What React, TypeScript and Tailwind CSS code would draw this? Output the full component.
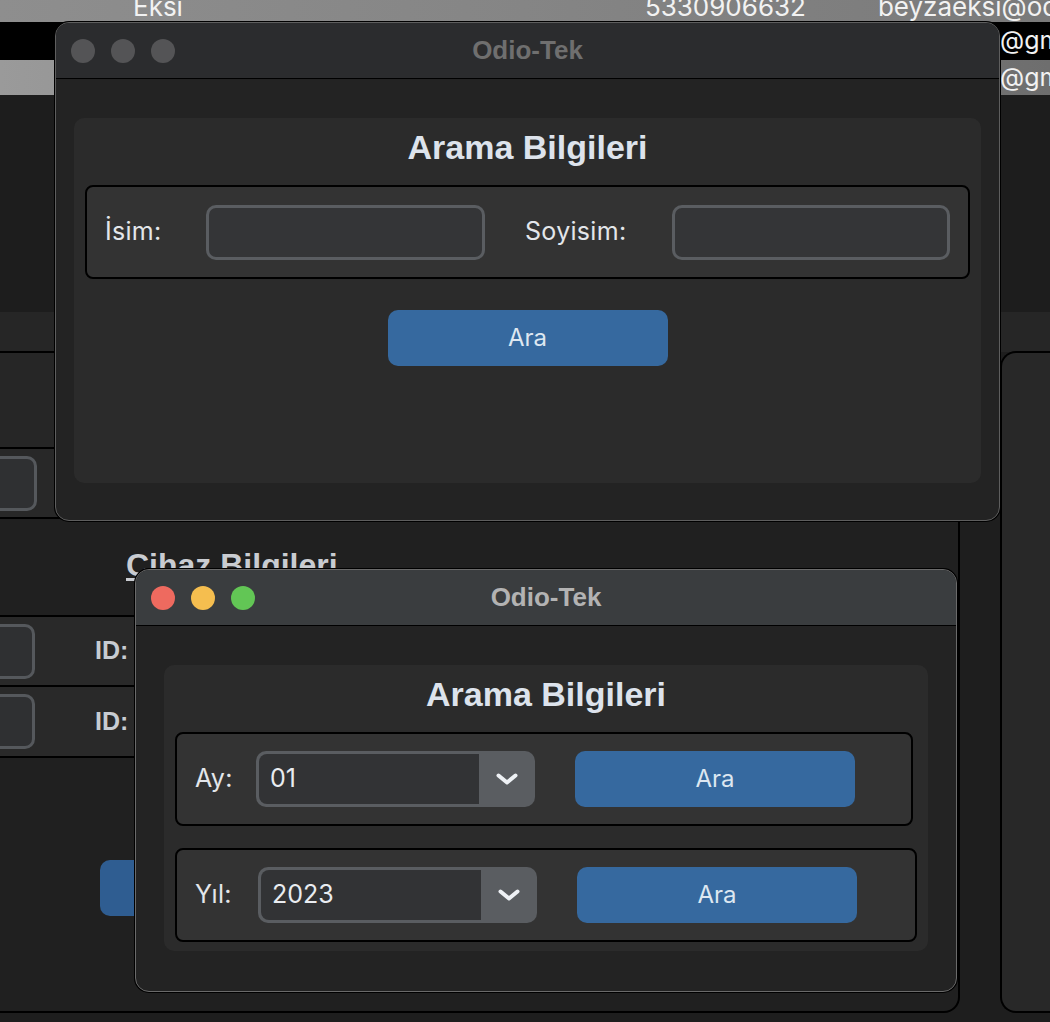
import React from 'react';

const ui = { fontFamily: 'Inter, "Noto Sans", sans-serif' };
const head = { fontFamily: '"Liberation Sans", Arial, sans-serif' };

const Chevron = () => (
  <svg width="24" height="14" viewBox="0 0 24 14" fill="none">
    <path d="M3.5 3.5l8.5 7 8.5-7" stroke="#eef1f5" strokeWidth="4" strokeLinecap="round" strokeLinejoin="round" />
  </svg>
);

const Lights = ({ active }: { active: boolean }) => (
  <div className="flex items-center gap-[16px]">
    <span className={`w-[24px] h-[24px] rounded-full ${active ? 'bg-[#ee6a5f]' : 'bg-[#545456]'}`} />
    <span className={`w-[24px] h-[24px] rounded-full ${active ? 'bg-[#f5be4f]' : 'bg-[#545456]'}`} />
    <span className={`w-[24px] h-[24px] rounded-full ${active ? 'bg-[#62c655]' : 'bg-[#545456]'}`} />
  </div>
);

const TitleBar = ({ active }: { active: boolean }) => (
  <div
    className={`relative flex items-center h-[56px] px-[15px] border-b border-black ${active ? 'bg-[#3a3d3f]' : 'bg-[#2b2c2e]'}`}
  >
    <Lights active={active} />
    <div
      className={`absolute inset-0 flex items-center justify-center text-[26px] font-bold ${active ? 'text-[#b3b3b3]' : 'text-[#6f6f6f]'}`}
      style={head}
    >
      Odio-Tek
    </div>
  </div>
);

const Field = ({ w }: { w: string }) => (
  <div className={`${w} h-[55px] rounded-[10px] border-[3px] border-[#5a5d61] bg-[#343537]`} />
);

const Combo = ({ value }: { value: string }) => (
  <div className="flex w-[279px] h-[56px] rounded-[10px] bg-[#5a5d61] p-[3px] pr-0">
    <div className="flex-1 flex items-center pl-[11px] rounded-l-[8px] bg-[#323335] text-[25px] text-[#e9ecf0]">
      {value}
    </div>
    <div className="w-[56px] flex items-center justify-center">
      <Chevron />
    </div>
  </div>
);

const AraButton = ({ w }: { w: string }) => (
  <button className={`${w} h-[56px] rounded-[10px] bg-[#36699f] text-[24px] text-[#dde7f1]`}>Ara</button>
);

const label = 'text-[25px] tracking-[0.3px] text-[#e3e6ea]';

export default function App() {
  return (
    <div className="relative w-[1050px] h-[1022px] overflow-hidden bg-[#1e1e1e]" style={ui}>
      {/* background app */}
      <div className="flex flex-col h-full">
        <div className="h-[22px] overflow-hidden bg-gradient-to-r from-[#8e8e8e] via-[#858585] to-[#7a7a7a] text-[26px] text-[#f2f2f2]">
          <div className="flex leading-none mt-[-6px]">
            <span className="ml-[133px]">Eksi</span>
            <span className="ml-[462px]">5330906632</span>
            <span className="ml-[72px] whitespace-nowrap">beyzaeksi@odio.com</span>
          </div>
        </div>
        <div className="h-[38px] bg-black flex items-center justify-end text-[25px] text-[#f2f2f2] overflow-hidden">
          <span className="w-[50px] whitespace-nowrap">@gmail</span>
        </div>
        <div className="h-[35px] bg-gradient-to-r from-[#9a9a9a] to-[#6e6e6e] flex items-center justify-end text-[25px] text-[#f2f2f2] overflow-hidden">
          <span className="w-[50px] whitespace-nowrap">@gmail</span>
        </div>
        <div className="h-[217px] bg-[#1d1d1d]" />
        <div className="h-[40px] bg-[#262626]" />
        <div className="flex h-[662px] -mt-[1px]">
          <div className="w-[960px] flex flex-col border-2 border-l-0 border-black rounded-br-[16px] bg-[#202020] overflow-hidden">
            <div className="h-[96px] shrink-0 bg-[#262626] border-b-2 border-black" />
            <div className="h-[70px] shrink-0 bg-[#282828] border-b-2 border-black flex items-center">
              <div className="w-[80px] h-[55px] -ml-[43px] rounded-[10px] border-[3px] border-[#55585c] bg-[#2f3032]" />
            </div>
            <div className="h-[98px] shrink-0 pt-[30px] border-b-2 border-black">
              <span className="ml-[126px] text-[32px] leading-none font-bold underline text-[#c9ccd1]" style={head}>
                Cihaz Bilgileri
              </span>
            </div>
            <div className="h-[70px] shrink-0 bg-[#292929] border-b-2 border-black flex items-center">
              <div className="w-[80px] h-[55px] -ml-[45px] rounded-[10px] border-[3px] border-[#55585c] bg-[#2f3032]" />
              <span className="ml-[60px] text-[25px] font-bold text-[#c8ccd2]" style={head}>ID:</span>
            </div>
            <div className="h-[71px] shrink-0 bg-[#292929] border-b-2 border-black flex items-center">
              <div className="w-[80px] h-[55px] -ml-[45px] rounded-[10px] border-[3px] border-[#55585c] bg-[#2f3032]" />
              <span className="ml-[60px] text-[25px] font-bold text-[#c8ccd2]" style={head}>ID:</span>
            </div>
            <div className="pt-[102px] pl-[100px]">
              <div className="w-[300px] h-[56px] rounded-[10px] bg-[#2f5d91]" />
            </div>
          </div>
          <div className="flex-1 ml-[40px] border-2 border-r-0 border-black rounded-l-[16px] bg-[#282828]" />
        </div>
      </div>

      {/* window 1 (inactive) */}
      <div className="absolute left-[55px] top-[22px] w-[945px] h-[499px] rounded-[14px] border border-[#5e5e5e] bg-[#232323] overflow-hidden shadow-[0_0_0_1px_#000]">
        <TitleBar active={false} />
        <div className="px-[18px] pt-[39px] pb-[38px] h-[442px]">
          <div className="h-full rounded-[10px] bg-[#2b2b2b] px-[11px] pt-[8px] flex flex-col">
            <div className="text-center text-[34px] font-bold text-[#dde3ec] leading-[42px]" style={head}>
              Arama Bilgileri
            </div>
            <div className="mt-[17px] h-[94px] rounded-[8px] border-2 border-black bg-[#333333] flex items-center pl-[18px]">
              <span className={`w-[101px] ${label}`}>İsim:</span>
              <Field w="w-[279px]" />
              <span className={`ml-[40px] w-[147px] ${label}`}>Soyisim:</span>
              <Field w="w-[278px]" />
            </div>
            <div className="mt-[31px] flex justify-center">
              <AraButton w="w-[280px]" />
            </div>
          </div>
        </div>
      </div>

      {/* window 2 (active) */}
      <div className="absolute left-[135px] top-[569px] w-[822px] h-[423px] rounded-[14px] border border-[#6a6a6a] bg-[#232323] overflow-hidden shadow-[0_0_0_1px_#000]">
        <TitleBar active />
        <div className="pl-[28px] pr-[28px] pt-[39px] pb-[41px] h-[366px]">
          <div className="h-full rounded-[10px] bg-[#2b2b2b] px-[11px] pt-[8px] flex flex-col">
            <div className="text-center text-[34px] font-bold text-[#dde3ec] leading-[42px]" style={head}>
              Arama Bilgileri
            </div>
            <div className="mt-[17px] w-[738px] h-[94px] rounded-[8px] border-2 border-black bg-[#333333] flex items-center pl-[18px]">
              <span className={`w-[61px] ${label}`}>Ay:</span>
              <Combo value="01" />
              <div className="ml-[40px]">
                <AraButton w="w-[280px]" />
              </div>
            </div>
            <div className="mt-[22px] w-[742px] h-[94px] rounded-[8px] border-2 border-black bg-[#333333] flex items-center pl-[18px]">
              <span className={`w-[63px] ${label}`}>Yıl:</span>
              <Combo value="2023" />
              <div className="ml-[40px]">
                <AraButton w="w-[280px]" />
              </div>
            </div>
          </div>
        </div>
      </div>
    </div>
  );
}
